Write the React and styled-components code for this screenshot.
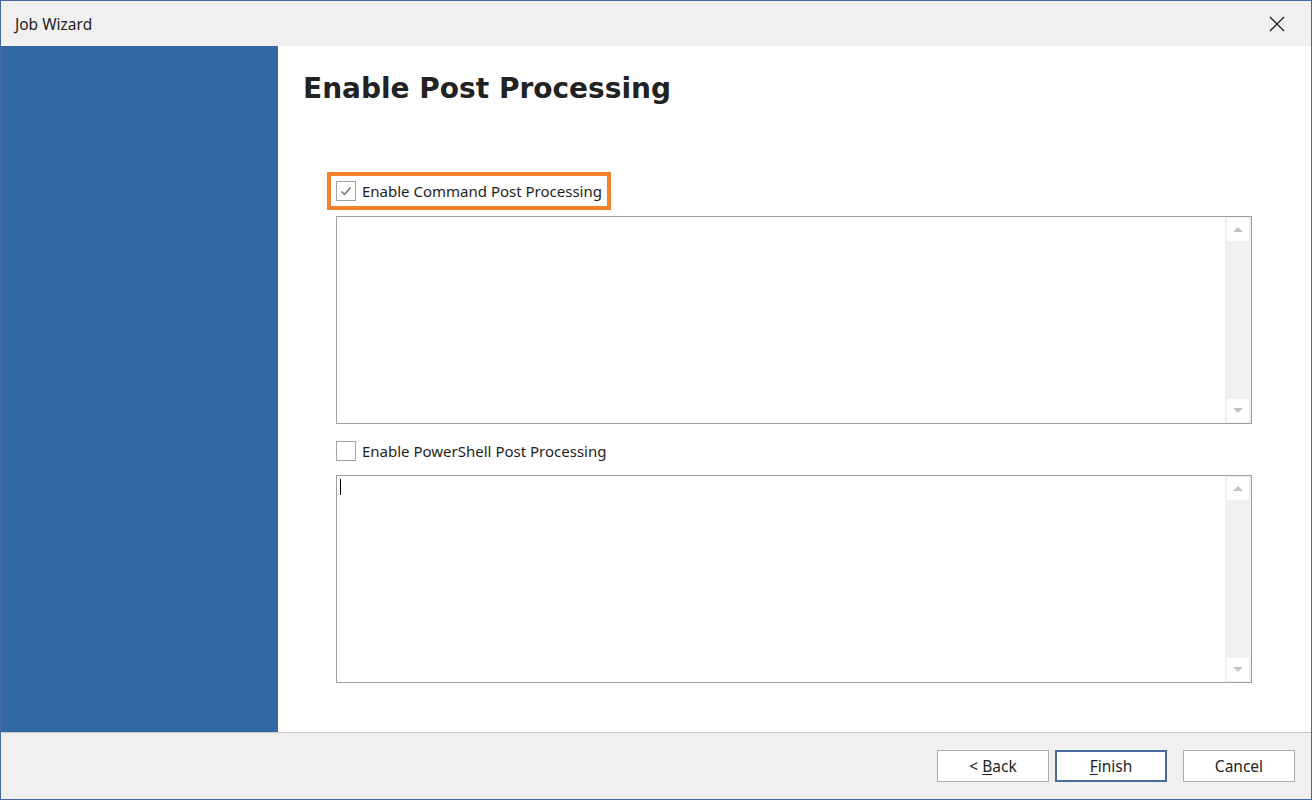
import styled, { createGlobalStyle } from "styled-components";

const Global = createGlobalStyle`
    html, body {
        margin: 0;
        padding: 0;
        background: #ffffff;
    }
    * {
        box-sizing: border-box;
    }
`

const Window = styled.div`
    width: 1312px;
    height: 800px;
    border: 1px solid #4468a0;
    display: flex;
    flex-direction: column;
    font-family: 'Noto Sans', 'Open Sans', sans-serif;
    color: #1e1e1e;
    background: #f0f0f0;
`

const TitleBar = styled.div`
    height: 45px;
    display: flex;
    align-items: center;
    justify-content: space-between;
    padding: 0 25px 0 14px;
    font-size: 15.5px;
    background: #f0f0f0;
`

const CloseButton = styled.button`
    border: none;
    background: transparent;
    padding: 0;
    width: 18px;
    height: 18px;
    display: flex;
    align-items: center;
    justify-content: center;
`

const Body = styled.div`
    flex: 1;
    display: flex;
`

const Sidebar = styled.div`
    width: 277px;
    background: #3467a6;
`

const Content = styled.div`
    flex: 1;
    background: #ffffff;
    padding: 26px 0 0 25px;
`

const Heading = styled.h1`
    margin: 0 0 75px;
    font-family: 'DejaVu Sans', Verdana, sans-serif;
    font-weight: 700;
    font-size: 28px;
    line-height: 34px;
    color: #222222;
`

const Group = styled.div`
    padding-left: 33px;
    width: 974px;
`

const OptionRow = styled.label`
    display: flex;
    width: fit-content;
    align-items: center;
    gap: 6px;
    height: 20px;
    font-size: 15px;
    color: #1e1e1e;
    outline: ${p => p.$highlighted ? '4px solid #f5822a' : 'none'};
    outline-offset: 5px;
`

const Box = styled.span`
    width: 20px;
    height: 20px;
    border: 1px solid #a3a3a3;
    background: #ffffff;
    display: flex;
    align-items: center;
    justify-content: center;
`

const Editor = styled.div`
    width: 916px;
    height: 208px;
    margin: ${p => p.$top}px 0 ${p => p.$bottom}px;
    border: 1px solid #a0a0a0;
    background: #ffffff;
    display: flex;
    justify-content: space-between;
`

const Caret = styled.span`
    width: 1px;
    height: 16px;
    margin: 3px 0 0 3px;
    background: #000000;
`

const Scrollbar = styled.div`
    width: 26px;
    background: #f0f0f0;
    padding: 0 1px;
    display: flex;
    flex-direction: column;
    justify-content: space-between;
`

const ArrowButton = styled.div`
    height: 25px;
    background: #ffffff;
    display: flex;
    align-items: center;
    justify-content: center;
    border: 1px solid #f0f0f0;
`

const Arrow = styled.span`
    width: 0;
    height: 0;
    border-left: 5px solid transparent;
    border-right: 5px solid transparent;
    ${p => p.$down
        ? 'border-top: 5px solid #c2c2c2;'
        : 'border-bottom: 5px solid #c2c2c2;'}
`

const Footer = styled.div`
    height: 67px;
    border-top: 1px solid #c8c8c8;
    background: #f0f0f0;
    display: flex;
    justify-content: flex-end;
    align-items: flex-start;
    padding: 17px 16px 0 0;
`

const Button = styled.button`
    width: 112px;
    height: 32px;
    margin-left: ${p => p.$gap}px;
    background: #ffffff;
    border: ${p => p.$default ? '2px solid #4a6a9c' : '1px solid #adadad'};
    font-family: 'Noto Sans', 'Open Sans', sans-serif;
    font-size: 15.5px;
    color: #1e1e1e;
    padding: 0;

    u {
        text-decoration: underline;
        text-underline-offset: 2px;
    }
`

function Checkbox({ checked }) {
    return (
        <Box>
            {checked && (
                <svg width="14" height="14" viewBox="0 0 14 14">
                    <path d="M2.5 7.5 L5.5 10.5 L11.5 3.5" fill="none" stroke="#6e6e6e" strokeWidth="1.4" />
                </svg>
            )}
        </Box>
    )
}

function ScriptBox({ top, bottom, focused }) {
    return (
        <Editor $top={top} $bottom={bottom}>
            {focused ? <Caret /> : <span />}
            <Scrollbar>
                <ArrowButton><Arrow /></ArrowButton>
                <ArrowButton><Arrow $down /></ArrowButton>
            </Scrollbar>
        </Editor>
    )
}

export default function App() {
    return <>
        <Global />
        <Window>
            <TitleBar>
                <span>Job Wizard</span>
                <CloseButton>
                    <svg width="16" height="16" viewBox="0 0 16 16">
                        <path d="M1 1 L15 15 M15 1 L1 15" stroke="#1e1e1e" strokeWidth="1.3" />
                    </svg>
                </CloseButton>
            </TitleBar>
            <Body>
                <Sidebar />
                <Content>
                    <Heading>Enable Post Processing</Heading>
                    <Group>
                        <OptionRow $highlighted>
                            <Checkbox checked />
                            Enable Command Post Processing
                        </OptionRow>
                        <ScriptBox top={15} bottom={17} />
                        <OptionRow>
                            <Checkbox />
                            Enable PowerShell Post Processing
                        </OptionRow>
                        <ScriptBox top={14} bottom={0} focused />
                    </Group>
                </Content>
            </Body>
            <Footer>
                <Button>&lt; <u>B</u>ack</Button>
                <Button $default $gap={6}><u>F</u>inish</Button>
                <Button $gap={16}>Cancel</Button>
            </Footer>
        </Window>
    </>
}
